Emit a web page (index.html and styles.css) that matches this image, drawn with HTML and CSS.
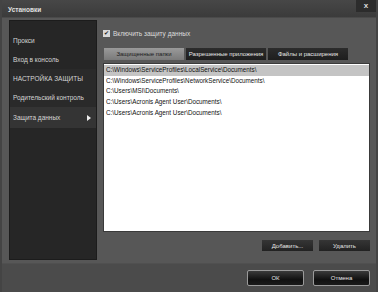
FILE: index.html
```html
<!DOCTYPE html>
<html lang="ru">

<head>
    <meta charset="UTF-8">
    <title>Установки</title>
    <link rel="stylesheet" href="styles.css">
</head>

<body>
    <div class="window">
        <div class="titlebar">
            <span class="title">Установки</span>
            <span class="close">x</span>
        </div>
        <div class="main">
            <div class="sidebar">
                <div class="nav-item">Прокси</div>
                <div class="nav-item">Вход в консоль</div>
                <div class="nav-item nav-group">НАСТРОЙКА ЗАЩИТЫ</div>
                <div class="nav-item nav-group">Родительский контроль</div>
                <div class="nav-item active">Защита данных <span class="arrow"></span></div>
            </div>
            <div class="content">
                <label class="check-row">
                    <span class="checkbox">&#10004;</span>
                    Включить защиту данных
                </label>
                <div class="tabs">
                    <div class="tab selected">Защищенные папки</div>
                    <div class="tab">Разрешенные приложения</div>
                    <div class="tab">Файлы и расширения</div>
                </div>
                <div class="list">
                    <div class="row selected">C:\Windows\ServiceProfiles\LocalService\Documents\</div>
                    <div class="row">C:\Windows\ServiceProfiles\NetworkService\Documents\</div>
                    <div class="row">C:\Users\MSI\Documents\</div>
                    <div class="row">C:\Users\Acronis Agent User\Documents\</div>
                    <div class="row">C:\Users\Acronis Agent User\Documents\</div>
                </div>
                <div class="list-actions">
                    <button class="btn">Добавить...</button>
                    <button class="btn">Удалить</button>
                </div>
            </div>
        </div>
        <div class="footer">
            <button class="btn btn-main">ОК</button>
            <button class="btn btn-main">Отмена</button>
        </div>
    </div>
</body>

</html>
```

FILE: styles.css
```css
body {
    margin: 0;
    font-family: "Liberation Sans", Arial, sans-serif;
    background-color: #2e2e2e;
}

.window {
    width: 378px;
    height: 292px;
    box-sizing: border-box;
    background-color: #575757;
    border-left: 2px solid #444;
    border-right: 2px solid #444;
    display: flex;
    flex-direction: column;
}

.titlebar {
    height: 17px;
    flex-shrink: 0;
    display: flex;
    align-items: flex-start;
    justify-content: space-between;
    background: linear-gradient(#474747, #3b3b3b);
    border-bottom: 1px solid #4a4a4a;
}

.title {
    margin: 6px 0 0 6px;
    font-size: 6.5px;
    font-weight: bold;
    color: #e0e0e0;
}

.close {
    width: 20px;
    height: 12px;
    line-height: 11px;
    text-align: center;
    font-size: 8px;
    font-weight: bold;
    color: #ddd;
    background-color: #2c2c2c;
}

.main {
    flex: 1;
    display: flex;
    padding: 2px 6px 3px 7px;
}

.sidebar {
    width: 88px;
    background-color: #262626;
    border: 1px solid #1c1c1c;
    padding-top: 10px;
    box-sizing: border-box;
}

.nav-item {
    height: 19px;
    line-height: 19px;
    padding-left: 3px;
    font-size: 6.5px;
    color: #d4d4d4;
    position: relative;
}

.nav-group {
    background-color: #2a2a2a;
}

.nav-item.active {
    height: 21px;
    line-height: 21px;
    background-color: #343434;
}

.arrow {
    position: absolute;
    right: 5px;
    top: 8px;
    border-left: 4px solid #eee;
    border-top: 3px solid transparent;
    border-bottom: 3px solid transparent;
}

.content {
    flex: 1;
    margin-left: 6px;
    display: flex;
    flex-direction: column;
}

.check-row {
    display: flex;
    align-items: center;
    margin-top: 10px;
    font-size: 6.5px;
    color: #dcdcdc;
}

.checkbox {
    width: 7px;
    height: 7px;
    margin-right: 3px;
    background-color: #d8d8d8;
    color: #222;
    font-size: 6px;
    line-height: 7px;
    text-align: center;
}

.tabs {
    display: flex;
    gap: 2px;
    margin-top: 11px;
    margin-left: 1px;
}

.tab {
    width: 80px;
    height: 12px;
    line-height: 12px;
    text-align: center;
    font-size: 6px;
    color: #e6e6e6;
    background: linear-gradient(#2c2c2c, #1e1e1e);
}

.tab.selected {
    color: #1c1c1c;
    background: linear-gradient(#9a9a9a, #7a7a7a);
}

.list {
    height: 169px;
    margin-top: 3px;
    background-color: #fff;
    border: 1px solid #3a3a3a;
    box-sizing: border-box;
    padding-top: 1px;
}

.row {
    height: 10.7px;
    line-height: 10.7px;
    padding-left: 2px;
    font-size: 6.3px;
    color: #111;
}

.row.selected {
    background-color: #c4c4c4;
}

.list-actions {
    display: flex;
    justify-content: flex-end;
    gap: 6px;
    margin-top: 8px;
}

.btn {
    width: 51px;
    height: 11px;
    padding: 0;
    font-family: inherit;
    font-size: 6px;
    color: #e6e6e6;
    background: linear-gradient(#353535, #222);
    border: none;
}

.footer {
    height: 29px;
    flex-shrink: 0;
    background-color: #4b4b4b;
    border-top: 1px solid #505050;
    display: flex;
    justify-content: flex-end;
    align-items: center;
    gap: 9px;
    padding-right: 6px;
    box-sizing: border-box;
}

.btn-main {
    width: 57px;
    height: 16px;
    border: 1px solid #9a9a9a;
    border-radius: 2px;
    background: linear-gradient(#3a3a3a, #111 60%, #1a1a1a);
}
```
